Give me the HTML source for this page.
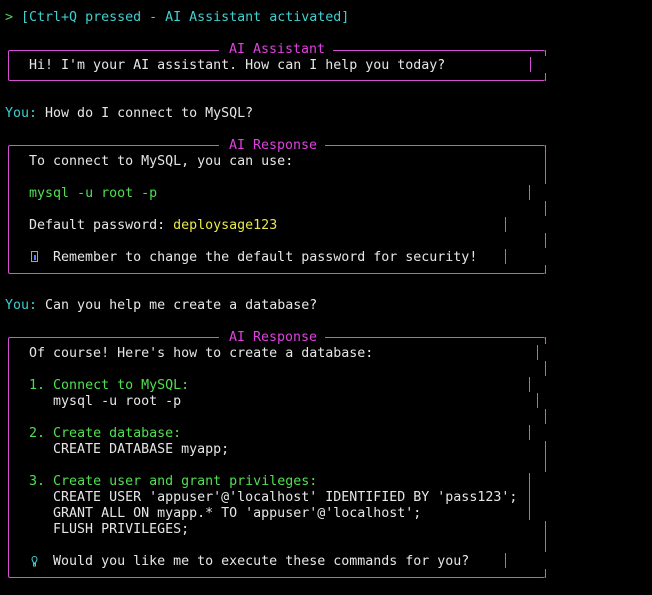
<!DOCTYPE html>
<html><head><meta charset="utf-8"><style>
html,body{margin:0;padding:0;background:#000;width:652px;height:595px;overflow:hidden}
body{position:relative;font-family:"DejaVu Sans Mono","Liberation Mono",monospace;font-size:13.3px}
pre{position:absolute;left:5px;top:10px;margin:0;font:inherit;line-height:16px;color:#e6e6e6;white-space:pre}
.c{color:#3fcfcf}.g{color:#4fe04f}.y{color:#e8e84a}.p{color:#56d056}
.box{position:absolute;left:8px;width:537px;border:1px solid #d44fd4;border-right:none;border-radius:2px;box-sizing:border-box}
.t{position:absolute;background:#000;color:#e040e0;line-height:16px;padding-left:10px;box-sizing:border-box;white-space:pre;height:12px;overflow:visible}
.b{position:absolute;width:1px;background:#d44fd4}
</style></head><body>
<div class="box" style="top:50px;height:31px"></div>
<div class="box" style="top:145px;height:129px"></div>
<div class="box" style="top:337px;height:241px"></div>
<div class="t" style="left:219px;top:42px;width:114px">AI Assistant</div>
<div class="t" style="left:219px;top:138px;width:106px">AI Response</div>
<div class="t" style="left:219px;top:330px;width:106px">AI Response</div>
<!-- box1 right -->
<div class="b" style="left:545px;top:50px;height:6px"></div>
<div class="b" style="left:530px;top:57px;height:15px"></div>
<div class="b" style="left:545px;top:73px;height:8px"></div>
<!-- box2 right -->
<div class="b" style="left:545px;top:145px;height:39px"></div>
<div class="b" style="left:529px;top:185px;height:15px"></div>
<div class="b" style="left:545px;top:201px;height:15px"></div>
<div class="b" style="left:505px;top:217px;height:15px"></div>
<div class="b" style="left:545px;top:233px;height:15px"></div>
<div class="b" style="left:505px;top:249px;height:15px"></div>
<div class="b" style="left:545px;top:265px;height:9px"></div>
<!-- box3 right -->
<div class="b" style="left:545px;top:337px;height:7px"></div>
<div class="b" style="left:537px;top:345px;height:15px"></div>
<div class="b" style="left:545px;top:361px;height:15px"></div>
<div class="b" style="left:529px;top:377px;height:15px"></div>
<div class="b" style="left:537px;top:393px;height:15px"></div>
<div class="b" style="left:545px;top:409px;height:15px"></div>
<div class="b" style="left:529px;top:425px;height:15px"></div>
<div class="b" style="left:545px;top:441px;height:31px"></div>
<div class="b" style="left:529px;top:473px;height:47px"></div>
<div class="b" style="left:545px;top:521px;height:31px"></div>
<div class="b" style="left:505px;top:553px;height:15px"></div>
<div class="b" style="left:545px;top:569px;height:9px"></div>
<!-- icons -->
<svg style="position:absolute;left:30px;top:250px" width="9" height="14"><rect x="1.5" y="1.5" width="6" height="10" fill="none" stroke="#3fcfcf"/><rect x="4" y="5" width="2" height="5" fill="#5080ff"/></svg>
<svg style="position:absolute;left:30px;top:554px" width="9" height="14"><path d="M2 5a2.5 2.5 0 1 1 5 0c0 2-1.5 2.5-1.5 4h-2C3.5 7.5 2 7 2 5z M3.5 10h2v2h-2z" fill="none" stroke="#3fcfcf"/></svg>
<pre><span class="p">&gt;</span><span class="c"> [Ctrl+Q pressed - AI Assistant activated]</span>


   Hi! I'm your AI assistant. How can I help you today?


<span class="c">You:</span> How do I connect to MySQL?


   To connect to MySQL, you can use:

   <span class="g">mysql -u root -p</span>

   Default password: <span class="y">deploysage123</span>

      Remember to change the default password for security!


<span class="c">You:</span> Can you help me create a database?


   Of course! Here's how to create a database:

   <span class="g">1. Connect to MySQL:</span>
      mysql -u root -p

   <span class="g">2. Create database:</span>
      CREATE DATABASE myapp;

   <span class="g">3. Create user and grant privileges:</span>
      CREATE USER 'appuser'@'localhost' IDENTIFIED BY 'pass123';
      GRANT ALL ON myapp.* TO 'appuser'@'localhost';
      FLUSH PRIVILEGES;

      Would you like me to execute these commands for you?</pre>
</body></html>
